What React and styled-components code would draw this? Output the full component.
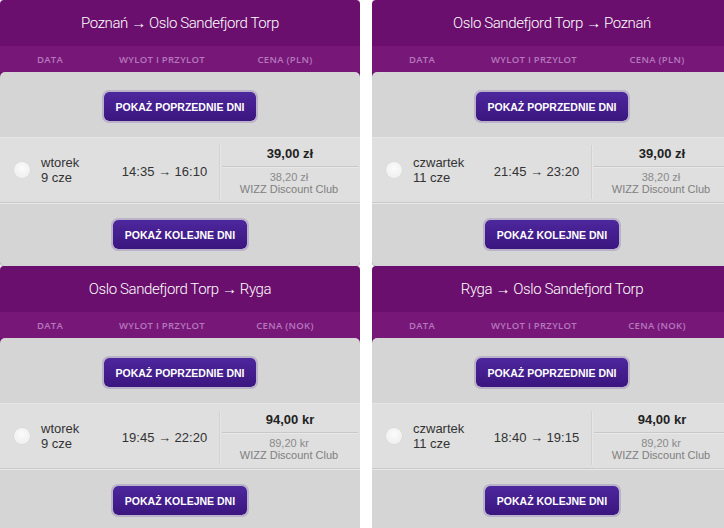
import React from 'react'
import styled, { createGlobalStyle } from 'styled-components'

const GlobalStyle = createGlobalStyle`
  html, body {
    margin: 0;
    padding: 0;
    background: #fff;
    overflow: hidden;
  }
  body {
    font-family: 'Liberation Sans', Arial, sans-serif;
  }
`

const Board = styled.div`
  display: grid;
  grid-template-columns: 360px 360px;
  grid-auto-rows: 266px;
  column-gap: 12px;
  width: 732px;
`

const Panel = styled.section`
  display: flex;
  flex-direction: column;
  background: #6a0f6d;
  border-radius: 4px;
  overflow: hidden;
`

const RouteTitle = styled.h2`
  margin: 0;
  height: 46px;
  display: flex;
  align-items: center;
  justify-content: center;
  color: #fff;
  font-family: Roboto, 'Open Sans', sans-serif;
  font-weight: 300;
  font-size: 15px;
  letter-spacing: -0.4px;
`

const ColumnBand = styled.div`
  height: 26px;
  display: grid;
  grid-template-columns: 100px 124px 122px;
  align-items: center;
  background: #771879;
  color: #b677bd;
  font-family: 'Open Sans', sans-serif;
  font-weight: 600;
  font-size: 9.5px;
  letter-spacing: 0.3px;
  text-transform: uppercase;
  text-align: center;
`

const Body = styled.div`
  flex: 1;
  display: flex;
  flex-direction: column;
  align-items: center;
  background: #d5d5d5;
  border-radius: 5px 5px 0 0;
  padding-top: 18px;
`

const DayButton = styled.button`
  height: 33px;
  padding: 0 12px;
  border: 2px solid #bab2c8;
  border-radius: 7px;
  background: linear-gradient(#4d279d, #3b167f);
  background-clip: padding-box;
  color: #fff;
  font-family: 'Liberation Sans', Arial, sans-serif;
  font-weight: bold;
  font-size: 10.5px;
  cursor: pointer;
  margin-top: ${({ $top }) => $top || 0}px;
`

const FlightRow = styled.div`
  align-self: stretch;
  height: 64px;
  margin-top: 14px;
  display: grid;
  grid-template-columns: 110px 109px 1fr;
  background: #dfdfdf;
  border-top: 1px solid #e6e6e6;
  border-bottom: 1px solid #c9c9c9;
  box-shadow: 0 1px 0 #e8e8e8;
  color: #333;
`

const DateCell = styled.label`
  display: flex;
  align-items: center;
  padding-left: 14px;
  gap: 11px;
  font-size: 13px;
  line-height: 15px;
`

const Radio = styled.span`
  width: 16px;
  height: 16px;
  border-radius: 50%;
  background: radial-gradient(circle at 50% 40%, #fbfbfb, #ececec);
  box-shadow: 0 0 1px #c6c6c6;
  flex-shrink: 0;
`

const TimeCell = styled.div`
  display: flex;
  align-items: center;
  justify-content: center;
  font-size: 13px;
  padding-top: 2px;
`

const PriceCell = styled.div`
  display: flex;
  flex-direction: column;
  align-items: stretch;
  margin: 7px 2px 3px 0;
  border-left: 1px solid #d2d2d2;
  box-shadow: inset 1px 0 0 #e6e6e6;
  text-align: center;
`

const Price = styled.div`
  font-weight: bold;
  font-size: 13px;
  color: #222;
  height: 21px;
  line-height: 18px;
  margin-left: 2px;
  border-bottom: 1px solid #c8c8c8;
  box-shadow: 0 1px 0 #e9e9e9;
`

const ClubPrice = styled.div`
  margin-top: 4px;
  font-size: 11px;
  line-height: 12px;
  color: #8a8a8a;
`

const ClubName = styled.div`
  font-size: 11px;
  line-height: 12px;
  color: #808080;
`

const routes = [
  {
    title: 'Poznań → Oslo Sandefjord Torp',
    currency: 'PLN',
    day: 'wtorek',
    date: '9 cze',
    times: '14:35 → 16:10',
    price: '39,00 zł',
    club: '38,20 zł',
  },
  {
    title: 'Oslo Sandefjord Torp → Poznań',
    currency: 'PLN',
    day: 'czwartek',
    date: '11 cze',
    times: '21:45 → 23:20',
    price: '39,00 zł',
    club: '38,20 zł',
  },
  {
    title: 'Oslo Sandefjord Torp → Ryga',
    currency: 'NOK',
    day: 'wtorek',
    date: '9 cze',
    times: '19:45 → 22:20',
    price: '94,00 kr',
    club: '89,20 kr',
  },
  {
    title: 'Ryga → Oslo Sandefjord Torp',
    currency: 'NOK',
    day: 'czwartek',
    date: '11 cze',
    times: '18:40 → 19:15',
    price: '94,00 kr',
    club: '89,20 kr',
  },
]

const RoutePanel = ({ route }) => (
  <Panel>
    <RouteTitle>{route.title}</RouteTitle>
    <ColumnBand>
      <span>Data</span>
      <span>Wylot i przylot</span>
      <span>Cena ({route.currency})</span>
    </ColumnBand>
    <Body>
      <DayButton>POKAŻ POPRZEDNIE DNI</DayButton>
      <FlightRow>
        <DateCell>
          <Radio />
          <span>
            {route.day}
            <br />
            {route.date}
          </span>
        </DateCell>
        <TimeCell>{route.times}</TimeCell>
        <PriceCell>
          <Price>{route.price}</Price>
          <ClubPrice>{route.club}</ClubPrice>
          <ClubName>WIZZ Discount Club</ClubName>
        </PriceCell>
      </FlightRow>
      <DayButton $top={15}>POKAŻ KOLEJNE DNI</DayButton>
    </Body>
  </Panel>
)

const App = () => (
  <>
    <GlobalStyle />
    <Board>
      {routes.map((route) => (
        <RoutePanel key={route.title} route={route} />
      ))}
    </Board>
  </>
)

export default App
